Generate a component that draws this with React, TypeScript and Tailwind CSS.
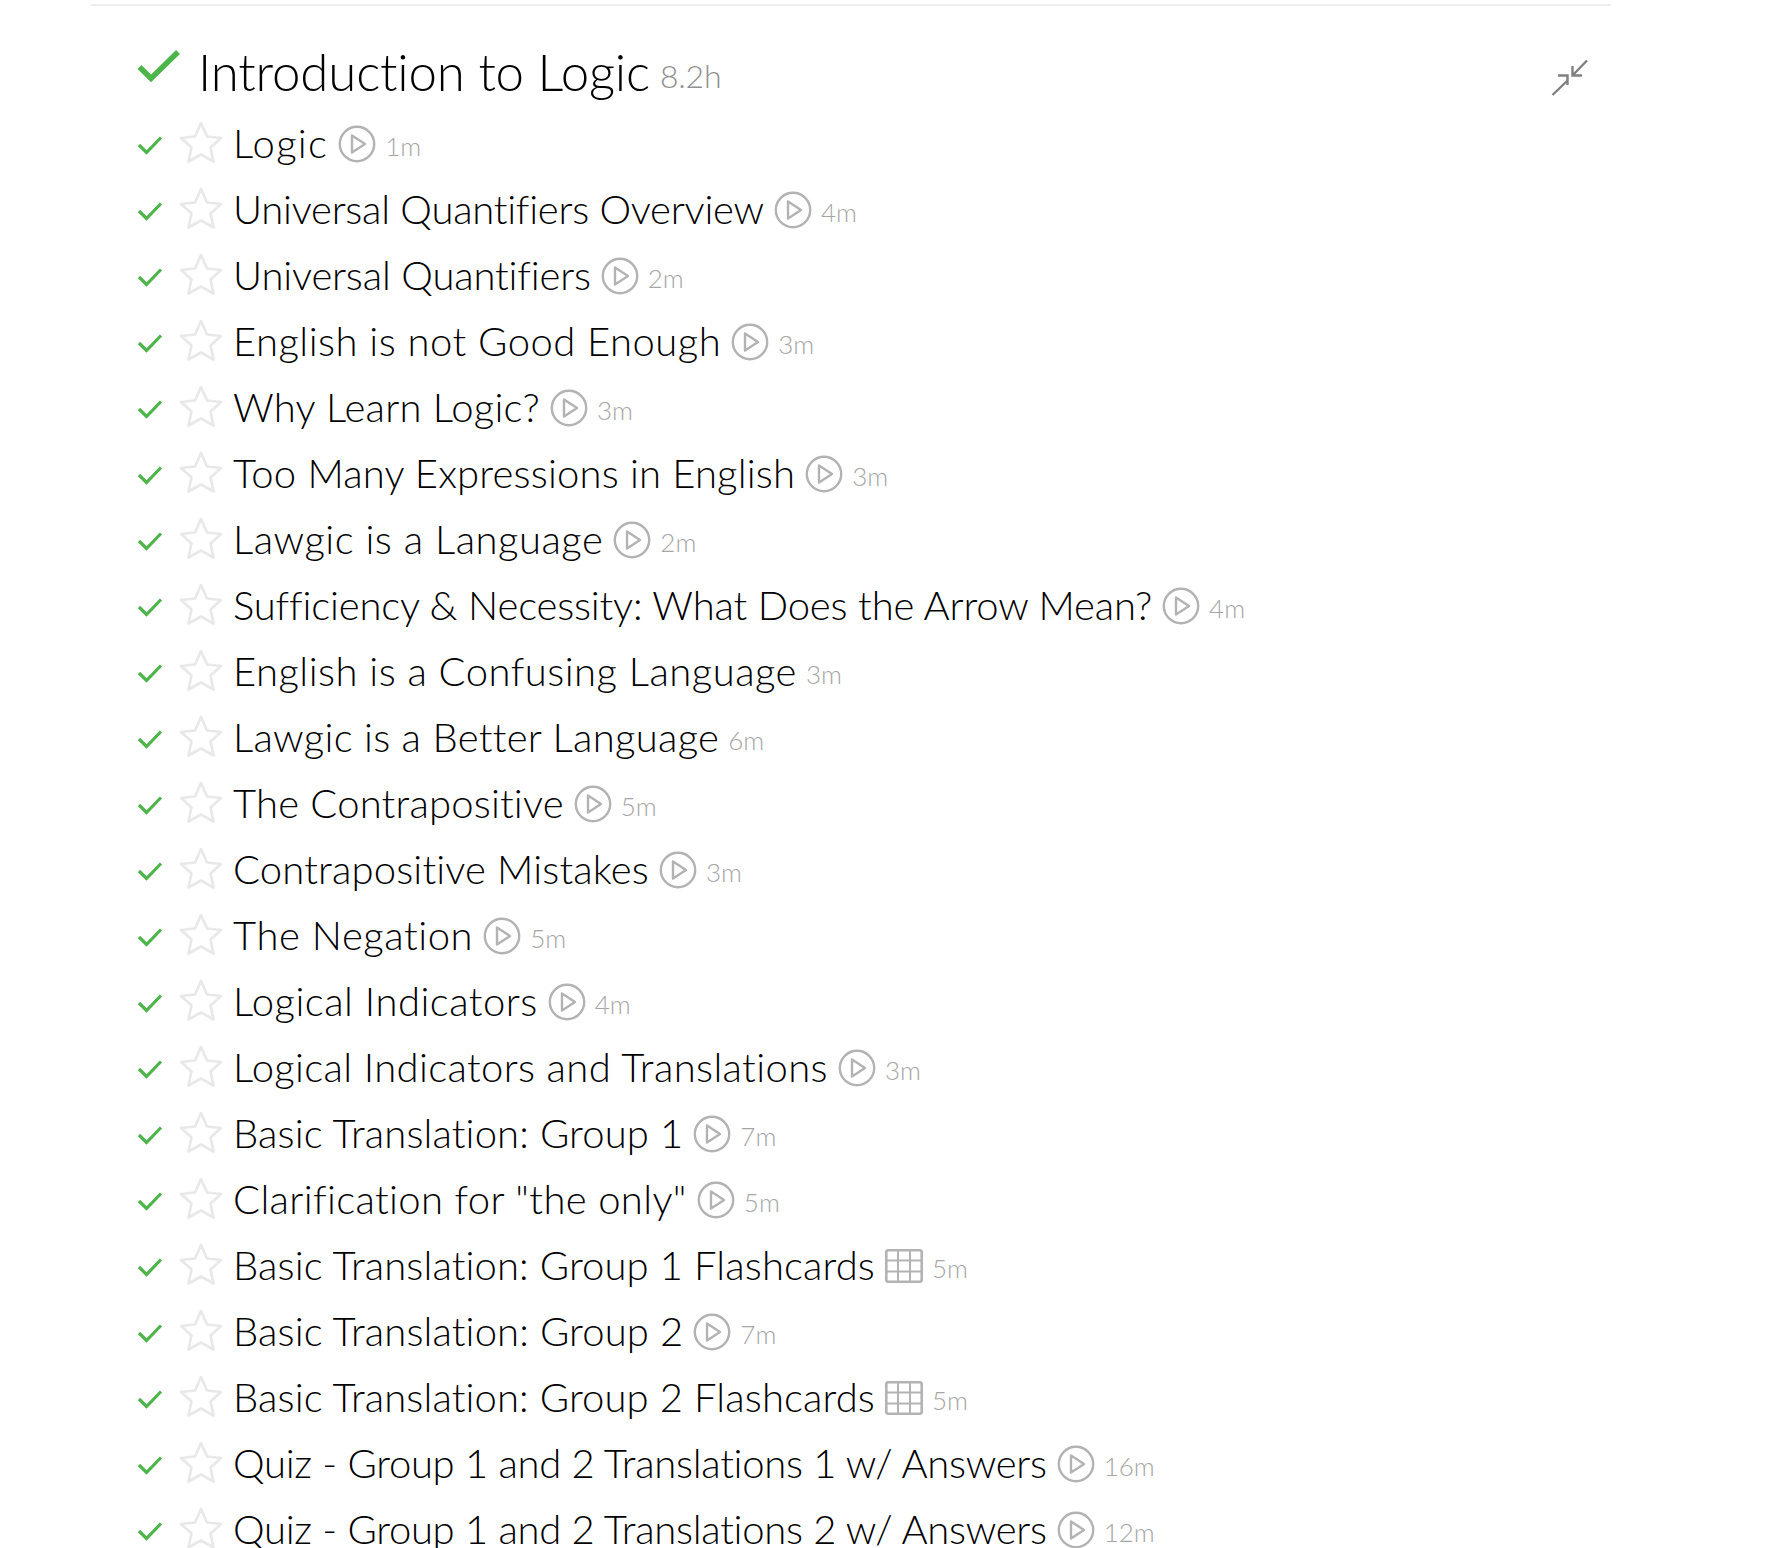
// name, attachment, duration, letter spacing that brings the row to the reference's width
const lessons: [string, 'video' | 'cards' | 'none', string, string][] = [
  ['Logic', 'video', '1m', 'tracking-[1.3px]'],
  ['Universal Quantifiers Overview', 'video', '4m', 'tracking-[-0.25px]'],
  ['Universal Quantifiers', 'video', '2m', 'tracking-[-0.16px]'],
  ['English is not Good Enough', 'video', '3m', 'tracking-[0.48px]'],
  ['Why Learn Logic?', 'video', '3m', 'tracking-[0.22px]'],
  ['Too Many Expressions in English', 'video', '3m', 'tracking-[0.18px]'],
  ['Lawgic is a Language', 'video', '2m', 'tracking-[0.5px]'],
  ['Sufficiency & Necessity: What Does the Arrow Mean?', 'video', '4m', 'tracking-[-0.16px]'],
  ['English is a Confusing Language', 'none', '3m', 'tracking-[0.47px]'],
  ['Lawgic is a Better Language', 'none', '6m', 'tracking-[0.29px]'],
  ['The Contrapositive', 'video', '5m', 'tracking-[0.19px]'],
  ['Contrapositive Mistakes', 'video', '3m', 'tracking-[0.16px]'],
  ['The Negation', 'video', '5m', 'tracking-[0.56px]'],
  ['Logical Indicators', 'video', '4m', 'tracking-[0.5px]'],
  ['Logical Indicators and Translations', 'video', '3m', 'tracking-[0.37px]'],
  ['Basic Translation: Group 1', 'video', '7m', 'tracking-[0.13px]'],
  ['Clarification for "the only"', 'video', '5m', 'tracking-[0.36px]'],
  ['Basic Translation: Group 1 Flashcards', 'cards', '5m', 'tracking-[0.12px]'],
  ['Basic Translation: Group 2', 'video', '7m', 'tracking-[0.13px]'],
  ['Basic Translation: Group 2 Flashcards', 'cards', '5m', 'tracking-[0.12px]'],
  ['Quiz - Group 1 and 2 Translations 1 w/ Answers', 'video', '16m', 'tracking-[-0.29px]'],
  ['Quiz - Group 1 and 2 Translations 2 w/ Answers', 'video', '12m', 'tracking-[-0.29px]'],
]

function Check({ big }: { big?: boolean }) {
  return big ? (
    <svg viewBox="0 0 44 34" className="w-[44px] h-[34px] shrink-0">
      <path d="M3.5 18 L15 29.5 L42 3" fill="none" stroke="#4cb54a" strokeWidth="5.5" />
    </svg>
  ) : (
    <svg viewBox="0 0 26 22" className="w-[26px] h-[22px] shrink-0 mt-[2px]">
      <path d="M2 11 L9.5 18.5 L24 3.5" fill="none" stroke="#4cb54a" strokeWidth="3.2" />
    </svg>
  )
}

function Star() {
  return (
    <svg viewBox="0 0 44 42" className="w-[44px] h-[42px] shrink-0 -mt-[4px]">
      <path
        d="M22 2 L28 15.5 L42 17 L31.5 26.5 L34.5 40.5 L22 33.5 L9.5 40.5 L12.5 26.5 L2 17 L16 15.5 Z"
        fill="none"
        stroke="#e8e8e8"
        strokeWidth="2.6"
        strokeLinejoin="round"
      />
    </svg>
  )
}

function Play() {
  return (
    <svg viewBox="0 0 38 38" className="w-[38px] h-[38px] shrink-0">
      <circle cx="19" cy="19" r="17.2" fill="none" stroke="#b3b3b3" strokeWidth="2.4" />
      <path d="M14 10.5 L27 19 L14 27.5 Z" fill="none" stroke="#b3b3b3" strokeWidth="2.4" strokeLinejoin="round" />
    </svg>
  )
}

function Cards() {
  return (
    <svg viewBox="0 0 38 34" className="w-[38px] h-[34px] shrink-0">
      <rect x="1.3" y="1.3" width="35.4" height="31.4" rx="2" fill="none" stroke="#b3b3b3" strokeWidth="2.6" />
      <path d="M13 1 V33 M25 1 V33 M1 11.5 H37 M1 22.5 H37" fill="none" stroke="#b3b3b3" strokeWidth="2" />
    </svg>
  )
}

function Collapse() {
  return (
    <svg viewBox="0 0 38 38" className="w-[38px] h-[38px]">
      <path
        d="M36 1.5 L21.5 16.5 M21.5 7 V16.5 H31 M1.5 36 L16.5 21.5 M7 16.5 H16.5 V26"
        fill="none"
        stroke="#808080"
        strokeWidth="2.4"
      />
    </svg>
  )
}

export default function App() {
  return (
    <div className="w-[1766px] h-[1548px] overflow-hidden bg-white text-black font-['Lato',sans-serif] font-light [font-variant-ligatures:none]">
      <div className="mx-[91px] mt-[4px] h-[2px] w-[1520px] bg-[#eeeeee]" />
      <div className="flex items-start pl-[136px] pr-[200px] pt-[32px] h-[105px]">
        <div className="flex items-center w-[62px] pt-[11px]">
          <Check big />
        </div>
        <h1 className="text-[51px] leading-[68px] font-light tracking-[-0.16px]">Introduction to Logic</h1>
        <span className="text-[32px] leading-[68px] text-[#8f8f8f] ml-[10px] mt-[4px] tracking-[-0.2px]">8.2h</span>
        <div className="ml-auto mt-[21px] -mr-[23px]">
          <Collapse />
        </div>
      </div>
      <ul className="pl-[137px]">
        {lessons.map(([name, kind, time, spacing]) => (
          <li key={name} className="flex items-center h-[66px]">
            <div className="w-[42px]">
              <Check />
            </div>
            <Star />
            <span className={`ml-[10px] -mt-[2px] text-[40px] leading-none ${spacing}`}>{name}</span>
            {kind === 'video' && (
              <span className="ml-[10px]">
                <Play />
              </span>
            )}
            {kind === 'cards' && (
              <span className="ml-[10px]">
                <Cards />
              </span>
            )}
            <span className="ml-[9px] mt-[4px] text-[26px] leading-none text-[#a6a6a6]">{time}</span>
          </li>
        ))}
      </ul>
    </div>
  )
}
